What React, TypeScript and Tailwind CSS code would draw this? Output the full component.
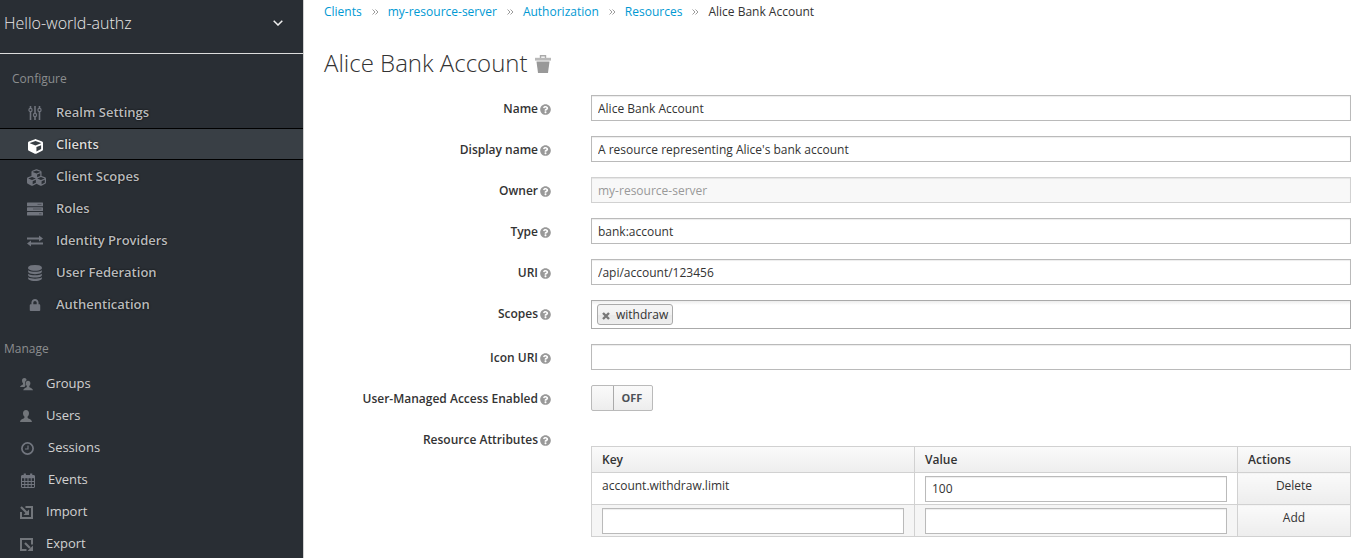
import { useState } from "react";
import type { ReactNode } from "react";
import { FaCube, FaCubes, FaLock, FaQuestionCircle } from "react-icons/fa";

function SlidersIcon() {
  return (
    <svg width="14" height="14" viewBox="0 0 14 14" fill="none" stroke="currentColor">
      <path d="M2.5 0v2M2.5 6v8M7 0v7M7 11v3M11.5 0v2M11.5 6v8" strokeWidth="1.6" />
      <circle cx="2.5" cy="4" r="1.6" strokeWidth="1.2" />
      <circle cx="7" cy="9" r="1.6" strokeWidth="1.2" />
      <circle cx="11.5" cy="4" r="1.6" strokeWidth="1.2" />
    </svg>
  );
}

function TasksIcon() {
  return (
    <svg width="16" height="14" viewBox="0 0 16 14">
      <g fill="currentColor">
        <rect y="0.5" width="16" height="3.7" rx="0.5" />
        <rect y="5.2" width="16" height="3.7" rx="0.5" />
        <rect y="9.9" width="16" height="3.7" rx="0.5" />
      </g>
      <path d="M10.500 2.400h4M6 7h8.500M12 11.800h2.500" stroke="#4a4e56" strokeWidth="0.900" />
    </svg>
  );
}

function ExchangeIcon() {
  return (
    <svg width="16" height="12" viewBox="0 0 16 12" fill="currentColor">
      <path d="M0 2.500h12V0.400l4 3-4 3V4.500H0zM16 7.500H4V5.400l-4 3 4 3V9.500h12z" />
    </svg>
  );
}

function DatabaseIcon() {
  return (
    <svg width="14" height="16" viewBox="0 0 1536 1792" fill="currentColor">
      <path d="M768 768q237 0 443-43t325-127v170q0 69-103 128t-280 93.5-385 34.5-385-34.5-280-93.5-103-128v-170q119 84 325 127t443 43zm0 768q237 0 443-43t325-127v170q0 69-103 128t-280 93.5-385 34.5-385-34.5-280-93.5-103-128v-170q119 84 325 127t443 43zm0-384q237 0 443-43t325-127v170q0 69-103 128t-280 93.5-385 34.5-385-34.5-280-93.5-103-128v-170q119 84 325 127t443 43zm0-1152q208 0 385 34.5t280 93.5 103 128v128q0 69-103 128t-280 93.5-385 34.5-385-34.5-280-93.5-103-128v-128q0-69 103-128t280-93.5 385-34.5z" />
    </svg>
  );
}

const PERSON =
  "M6 0c1.900 0 3 1.300 3 3.200 0 1.500-.6 2.700-1.400 3.400v1.200c.3 1 3.900 1 4.400 4.200H0c.5-3.200 4.100-3.200 4.400-4.200V6.600C3.600 5.900 3 4.700 3 3.200 3 1.300 4.100 0 6 0z";

function UserIcon() {
  return (
    <svg width="12" height="12" viewBox="0 0 12 12" fill="currentColor">
      <path d={PERSON} />
    </svg>
  );
}

function GroupIcon() {
  return (
    <svg width="13" height="13" viewBox="0 0 13 13" fill="currentColor">
      <path d="M4.300 0C5.700 0 6.600.9 6.600 2.300 5 3 4.700 5 5.500 6.800L5.400 7.500 4.500 9H0c.3-2 2.800-2 3-2.800v-1C2.400 4.700 2 3.700 2 2.500 2 .9 2.900 0 4.300 0z" />
      <path d="M8 2.800c1.500 0 2.400 1 2.400 2.500 0 1.200-.5 2.100-1.100 2.700v1c.3.900 3.300.9 3.700 3.300H3.300c.4-2.400 3.200-2.400 3.500-3.300V8C6.100 7.400 5.700 6.500 5.700 5.300c0-1.500.9-2.500 2.300-2.500z" />
    </svg>
  );
}

function ClockIcon() {
  return (
    <svg width="13" height="13" viewBox="0 0 13 13" fill="none" stroke="currentColor">
      <circle cx="6.500" cy="6.500" r="5.600" strokeWidth="1.700" />
      <path d="M7 3.500V7H4" strokeWidth="1.200" />
    </svg>
  );
}

function CalendarIcon() {
  return (
    <svg width="14" height="15" viewBox="0 0 14 15" fill="none" stroke="currentColor">
      <rect x="0.500" y="2.500" width="13" height="12" rx="0.500" />
      <path d="M0.500 3.500h13M0.500 4.500h13" strokeWidth="1.400" />
      <path d="M3.800 0.500v3.500M10.200 0.500v3.500" strokeWidth="2.200" />
      <path d="M3.750 5v9M7 5v9M10.250 5v9M0.500 8.500h13M0.500 11.500h13" strokeWidth="1" />
    </svg>
  );
}

function ImportIcon() {
  return (
    <svg width="13" height="13" viewBox="0 0 13 13">
      <path d="M5.500 1H12v11H1V6" fill="none" stroke="currentColor" strokeWidth="2" />
      <path d="M1 1l5.500 5.500" stroke="currentColor" strokeWidth="2.200" />
      <path d="M9 3.500V9H3.500z" fill="currentColor" />
    </svg>
  );
}

function ExportIcon() {
  return (
    <svg width="13" height="13" viewBox="0 0 13 13">
      <path d="M6.500 12H1V1h11v5.500" fill="none" stroke="currentColor" strokeWidth="2" />
      <path d="M5 5l5 5" stroke="currentColor" strokeWidth="2.200" />
      <path d="M13 7.500V13H7.500z" fill="currentColor" />
    </svg>
  );
}

function TrashIcon() {
  return (
    <svg width="16" height="18" viewBox="0 0 16 18">
      <path d="M5.500 3V0.700h5V3" fill="none" stroke="#aaaaaa" strokeWidth="1.400" />
      <path d="M0 2.800h16V5.600H0z" fill="#b9b9b9" />
      <path d="M1.500 6.500h13L13 18H3z" fill="#999999" />
    </svg>
  );
}

function Chevrons() {
  return (
    <svg className="shrink-0" width="7" height="6" viewBox="0 0 7 6" fill="none" stroke="#9c9c9c">
      <path d="M0.500 0.500L3 3 0.500 5.500M3.500 0.500L6 3 3.500 5.500" />
    </svg>
  );
}

type Item = { label: string; icon: ReactNode; active?: boolean; wide?: boolean };

const configure: Item[] = [
  { label: "Realm Settings", icon: <SlidersIcon /> },
  { label: "Clients", icon: <FaCube size={15} />, active: true },
  { label: "Client Scopes", icon: <FaCubes size={19} /> },
  { label: "Roles", icon: <TasksIcon /> },
  { label: "Identity Providers", icon: <ExchangeIcon /> },
  { label: "User Federation", icon: <DatabaseIcon /> },
  { label: "Authentication", icon: <FaLock size={12} /> },
];

const manage: Item[] = [
  { label: "Groups", icon: <GroupIcon /> },
  { label: "Users", icon: <UserIcon /> },
  { label: "Sessions", icon: <ClockIcon />, wide: true },
  { label: "Events", icon: <CalendarIcon />, wide: true },
  { label: "Import", icon: <ImportIcon /> },
  { label: "Export", icon: <ExportIcon /> },
];

function ConfigureItem({ label, icon, active }: Item) {
  return (
    <li>
      <a
        href="#"
        className={
          active
            ? "flex h-8 items-center border-y border-black bg-[#393f45] pl-[27px] pt-0.5 font-semibold text-[#dcdcdc]"
            : "flex h-8 items-center pl-[27px] pt-0.5 font-semibold text-[#b9babc]"
        }
      >
        <span
          className={
            active ? "flex w-[29px] pt-0.5 text-white" : "flex w-[29px] text-[#70747d]"
          }
        >
          <span className="flex min-w-4 justify-center">{icon}</span>
        </span>
        <span className="[text-shadow:0_0_2px_#000]">{label}</span>
      </a>
    </li>
  );
}

function ManageItem({ label, icon, wide }: Item) {
  return (
    <li>
      <a href="#" className="flex h-8 items-center pl-5 pt-1 text-[#d1d1d1]">
        <span className={wide ? "flex w-7 pl-px text-[#72767f]" : "flex w-[26px] text-[#72767b]"}>
          {icon}
        </span>
        {label}
      </a>
    </li>
  );
}

const INPUT =
  "block h-[26px] w-full border border-[#bababa] bg-white px-1.5 text-xs text-[#333333] shadow-[inset_0_1px_1px_rgba(3,3,3,0.075)] outline-none focus:border-[#0088ce] disabled:border-[#d1d1d1] disabled:bg-[#f8f8f8] disabled:text-[#999999]";

function Label({ text, htmlFor }: { text: string; htmlFor: string }) {
  return (
    <label
      htmlFor={htmlFor}
      className="flex h-[26px] items-center justify-end gap-0.5 pt-0.5 text-right font-semibold"
    >
      {text}
      <FaQuestionCircle className="shrink-0 text-[#999999]" size={11} />
    </label>
  );
}

function TextRow(props: { id: string; label: string; value: string; disabled?: boolean }) {
  return (
    <>
      <Label text={props.label} htmlFor={props.id} />
      <input
        id={props.id}
        type="text"
        defaultValue={props.value}
        disabled={props.disabled}
        className={INPUT}
      />
    </>
  );
}

function Crumb({ children }: { children: ReactNode }) {
  return (
    <li className="flex items-center gap-2.5">
      <a href="#" className="text-[#0099d3]">
        {children}
      </a>
      <Chevrons />
    </li>
  );
}

export default function App() {
  const [managed, setManaged] = useState(false);

  return (
    <div className="flex min-h-screen bg-white font-['Open_Sans',sans-serif] text-xs text-[#333333]">
      <aside className="w-[304px] shrink-0 border-r border-[#d1d1d1] bg-[#292e34] text-[13px]">
        <button
          type="button"
          className="flex h-[54px] w-full items-center justify-between border-b border-[#dcdcdc] pb-2 pl-1 pr-5 text-base font-light text-[#e8e8e8]"
        >
          Hello-world-authz
          <svg width="10" height="6" viewBox="0 0 10 6" fill="none" stroke="#f0f0f0" strokeWidth="1.500">
            <path d="M0.700 0.700L5 5 9.300 0.700" />
          </svg>
        </button>
        <nav>
          <h2 className="pb-[7px] pl-3 pt-[15px] text-xs font-medium leading-5 text-[#8b8d8f]">
            Configure
          </h2>
          <ul>
            {configure.map((item) => (
              <ConfigureItem key={item.label} {...item} />
            ))}
          </ul>
          <h2 className="pb-[7px] pl-1 pt-[19px] text-xs leading-5 text-[#8b8d8f]">Manage</h2>
          <ul>
            {manage.map((item) => (
              <ManageItem key={item.label} {...item} />
            ))}
          </ul>
        </nav>
      </aside>

      <main className="min-w-0 flex-1 pl-5 pr-1">
        <nav aria-label="Breadcrumb">
          <ol className="flex items-center gap-[9px] pt-0.5 leading-5">
            <Crumb>Clients</Crumb>
            <Crumb>my-resource-server</Crumb>
            <Crumb>Authorization</Crumb>
            <Crumb>Resources</Crumb>
            <li>Alice Bank Account</li>
          </ol>
        </nav>

        <div className="flex items-center gap-[7px] pb-4 pt-[25px]">
          <h1 className="text-2xl font-light">Alice Bank Account</h1>
          <button type="button" aria-label="Delete resource" className="pt-0.5">
            <TrashIcon />
          </button>
        </div>

        <form
          className="grid grid-cols-[227px_minmax(0,1fr)] gap-x-10 gap-y-[15px]"
          onSubmit={(e) => e.preventDefault()}
        >
          <TextRow id="name" label="Name" value="Alice Bank Account" />
          <TextRow id="display" label="Display name" value="A resource representing Alice's bank account" />
          <TextRow id="owner" label="Owner" value="my-resource-server" disabled />
          <TextRow id="type" label="Type" value="bank:account" />
          <TextRow id="uri" label="URI" value="/api/account/123456" />

          <Label text="Scopes" htmlFor="scopes" />
          <div className="flex h-[29px] items-center border border-[#aaaaaa] bg-[linear-gradient(#eeeeee_1%,#ffffff_15%)] pl-[5px]">
            <span className="flex h-[21px] items-center gap-1.5 rounded-[3px] border border-[#aaaaaa] bg-[linear-gradient(#f4f4f4_20%,#f0f0f0_50%,#e8e8e8_52%,#eeeeee)] px-1">
              <button type="button" aria-label="Remove withdraw" className="pt-0.5">
                <svg width="8" height="8" viewBox="0 0 8 8" stroke="#777777" strokeWidth="2.400">
                  <path d="M1 1l6 6M7 1L1 7" />
                </svg>
              </button>
              withdraw
            </span>
            <input id="scopes" type="text" className="h-full min-w-0 flex-1 bg-transparent px-1.5 outline-none" />
          </div>

          <TextRow id="icon-uri" label="Icon URI" value="" />

          <Label text="User-Managed Access Enabled" htmlFor="managed" />
          <label className="relative flex h-[26px] w-[62px] overflow-hidden rounded-xs border border-[#bababa] bg-[linear-gradient(#fafafa,#ededed)]">
            <input
              id="managed"
              type="checkbox"
              className="sr-only"
              checked={managed}
              onChange={(e) => setManaged(e.target.checked)}
            />
            <span
              className={
                managed
                  ? "order-2 w-[22px] border-l border-[#aaaaaa]"
                  : "w-[22px] border-r border-[#aaaaaa]"
              }
            />
            <span className="flex flex-1 items-center justify-center pr-0.5 text-[11px] font-bold text-[#4d5258]">
              {managed ? "ON" : "OFF"}
            </span>
          </label>

          <Label text="Resource Attributes" htmlFor="new-key" />
          <table className="mt-5 w-full table-fixed border-collapse border border-[#d1d1d1] text-left leading-5">
            <colgroup>
              <col />
              <col />
              <col className="w-[113px]" />
            </colgroup>
            <thead className="bg-[linear-gradient(#fafafa,#ededed)]">
              <tr className="h-[26px]">
                <th className="border border-[#d1d1d1] px-2.5 font-semibold">Key</th>
                <th className="border border-[#d1d1d1] px-2.5 font-semibold">Value</th>
                <th className="border border-[#d1d1d1] px-2.5 font-semibold">Actions</th>
              </tr>
            </thead>
            <tbody>
              <tr className="h-8">
                <td className="border border-[#d1d1d1] px-2.5 pt-[3px] align-top">account.withdraw.limit</td>
                <td className="border border-[#d1d1d1] px-2.5 py-0.5">
                  <input aria-label="Value" type="text" defaultValue="100" className={INPUT} />
                </td>
                <td className="border border-[#d1d1d1] bg-[linear-gradient(#fafafa,#ededed)] pt-[3px] text-center align-top">
                  <button type="button">Delete</button>
                </td>
              </tr>
              <tr className="h-8 bg-[#f5f5f5]">
                <td className="border border-[#d1d1d1] px-2.5 py-0.5">
                  <input id="new-key" type="text" className={INPUT} />
                </td>
                <td className="border border-[#d1d1d1] px-2.5 py-0.5">
                  <input aria-label="New value" type="text" className={INPUT} />
                </td>
                <td className="border border-[#d1d1d1] bg-[linear-gradient(#fafafa,#ededed)] pt-[3px] text-center align-top">
                  <button type="button">Add</button>
                </td>
              </tr>
            </tbody>
          </table>
        </form>
      </main>
    </div>
  );
}
